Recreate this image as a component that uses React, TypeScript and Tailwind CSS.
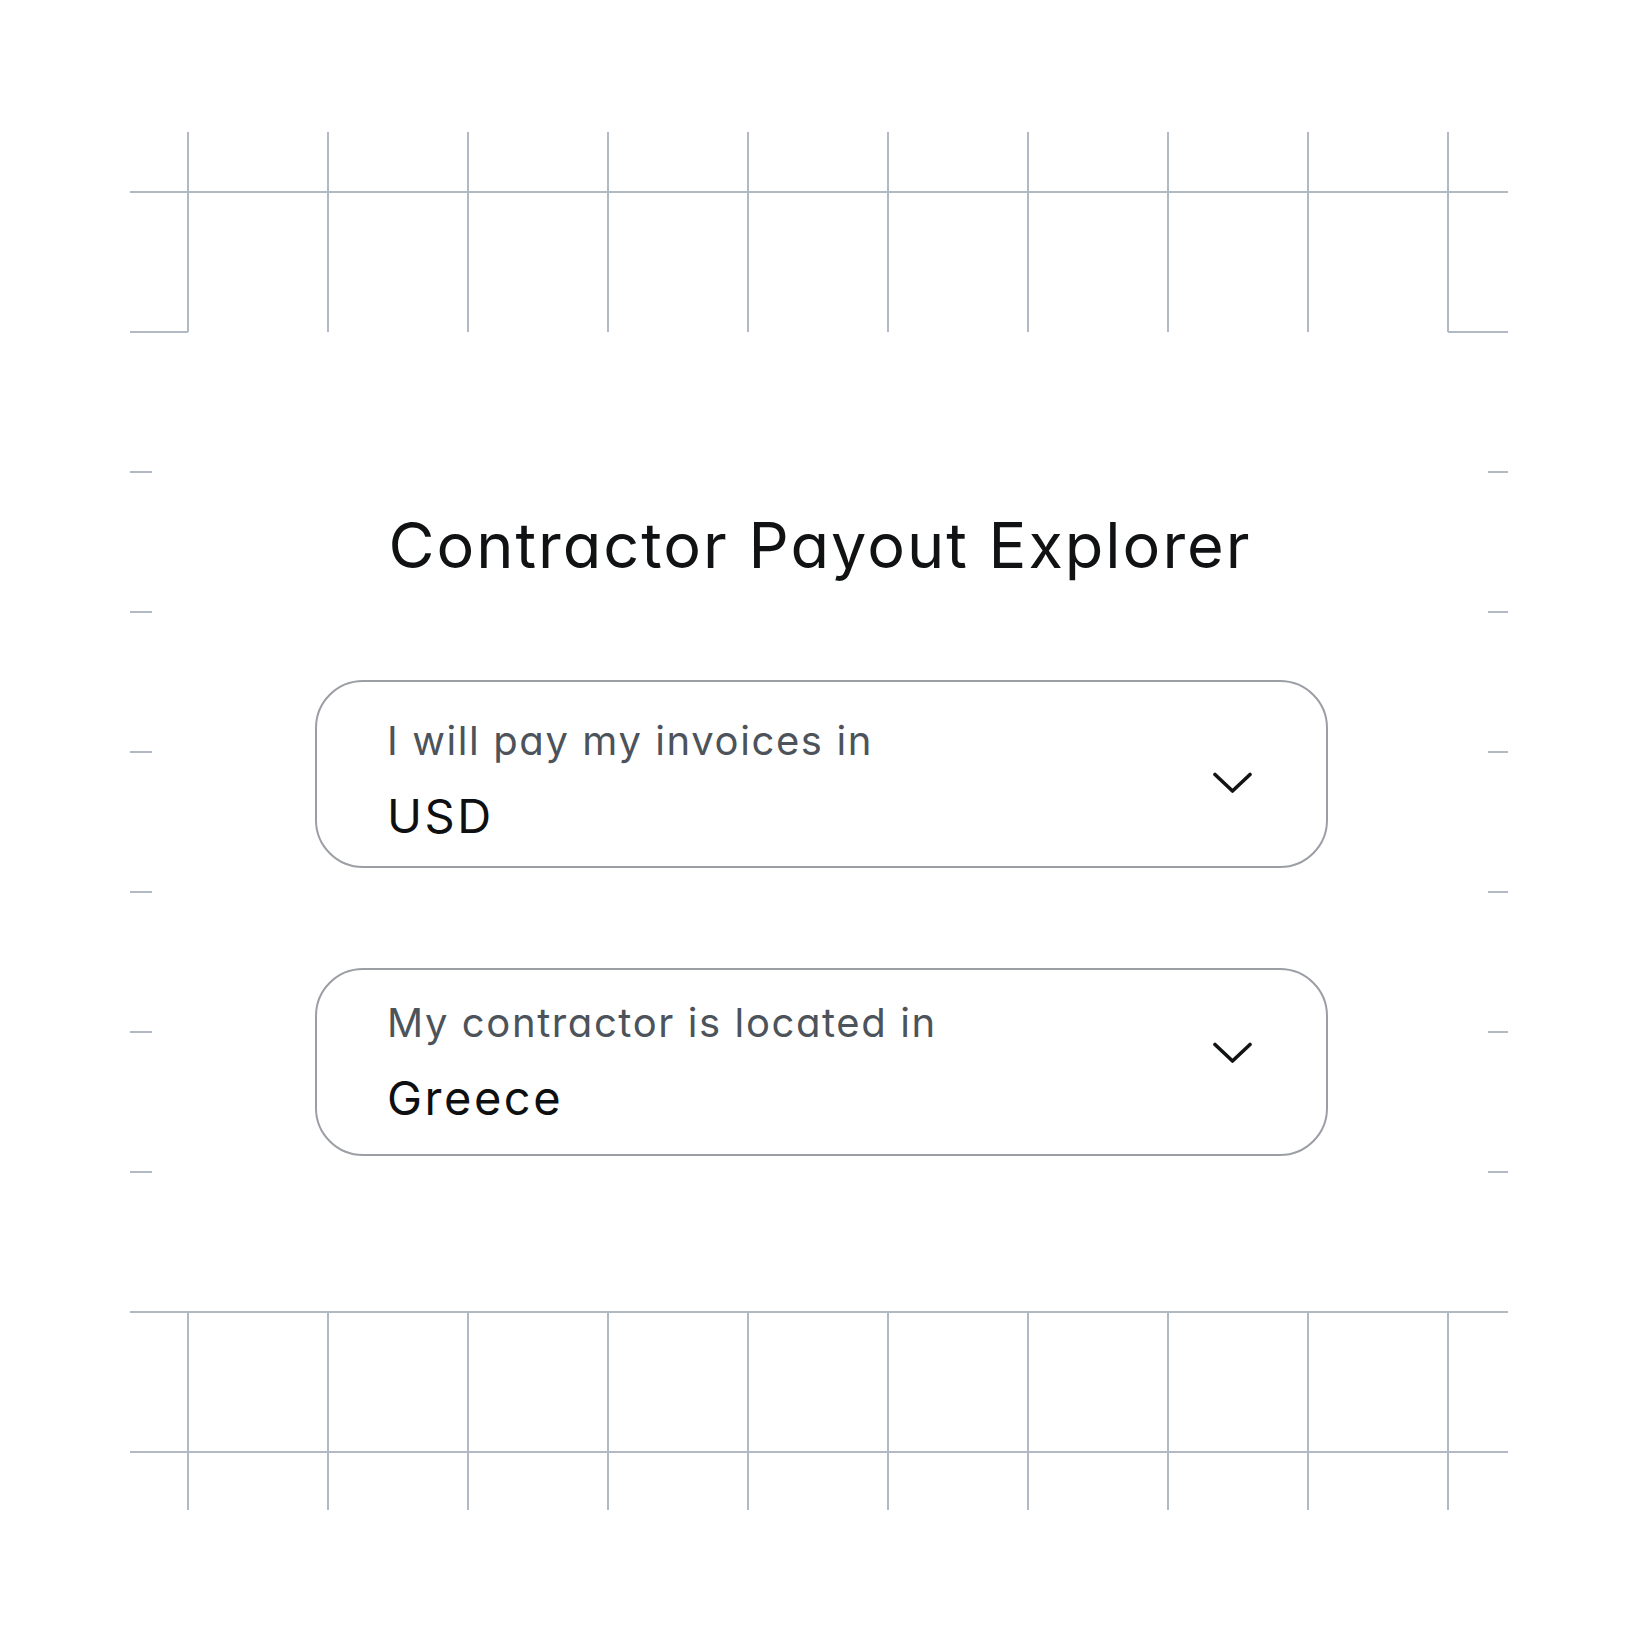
import { ReactNode } from 'react'

const LINE = '#b1b9c5'
const COLS = Array.from({ length: 10 }, (_, i) => 188 + i * 140)
const TICKS = [472, 612, 752, 892, 1032, 1172]

// Blueprint-style grid frame: full cells above and below, short ticks along the sides
function GridFrame() {
  return (
    <svg className="absolute inset-0 pointer-events-none" width={1640} height={1640} viewBox="0 0 1640 1640">
      <g stroke={LINE} strokeWidth={2} fill="none">
        {COLS.map((x) => (
          <line key={`t${x}`} x1={x} y1={132} x2={x} y2={332} />
        ))}
        {COLS.map((x) => (
          <line key={`b${x}`} x1={x} y1={1312} x2={x} y2={1510} />
        ))}
        <line x1={130} y1={192} x2={1508} y2={192} />
        <line x1={130} y1={332} x2={188} y2={332} />
        <line x1={1448} y1={332} x2={1508} y2={332} />
        {TICKS.map((y) => (
          <g key={y}>
            <line x1={130} y1={y} x2={152} y2={y} />
            <line x1={1488} y1={y} x2={1508} y2={y} />
          </g>
        ))}
        <line x1={130} y1={1312} x2={1508} y2={1312} />
        <line x1={130} y1={1452} x2={1508} y2={1452} />
      </g>
    </svg>
  )
}

function Chevron({ className }: { className?: string }) {
  return (
    <svg className={className} width={39} height={21} viewBox="0 0 39 21" fill="none">
      <path d="M2 2.5 19.5 19 37 2.5" stroke="#111315" strokeWidth={3.6} strokeLinecap="round" strokeLinejoin="round" />
    </svg>
  )
}

interface SelectFieldProps {
  label: string
  value: ReactNode
  textClass?: string
  chevronClass?: string
}

function SelectField({ label, value, textClass, chevronClass }: SelectFieldProps) {
  return (
    <button
      type="button"
      className="w-[1013px] h-[188px] ml-[315px] flex items-center justify-between border-[2.5px] border-[#9b9fa5] rounded-[48px] bg-white pl-[70px] pr-[74px] text-left"
    >
      <div className={`flex flex-col ${textClass ?? ''}`}>
        <span className="text-[40px] leading-none tracking-[1.6px] text-[#4d535a]">{label}</span>
        <span className="mt-[31px] text-[47px] leading-none tracking-[2.5px] text-[#0e0f10]">{value}</span>
      </div>
      <Chevron className={chevronClass} />
    </button>
  )
}

export default function App() {
  return (
    <div className="relative w-[1640px] h-[1640px] bg-white overflow-hidden font-['Inter','Liberation_Sans',sans-serif] [font-feature-settings:'cv11']">
      <GridFrame />
      <main className="relative flex flex-col pt-[514px]">
        <h1 className="text-center text-[63px] leading-none font-normal tracking-[2px] text-[#101213]">
          Contractor Payout Explorer
        </h1>
        <div className="mt-[103px] flex flex-col gap-[100px]">
          <SelectField
            label="I will pay my invoices in"
            value="USD"
            textClass="translate-y-[6px]"
            chevronClass="translate-y-[8px]"
          />
          <SelectField label="My contractor is located in" value="Greece" chevronClass="-translate-y-[10px]" />
        </div>
      </main>
    </div>
  )
}
